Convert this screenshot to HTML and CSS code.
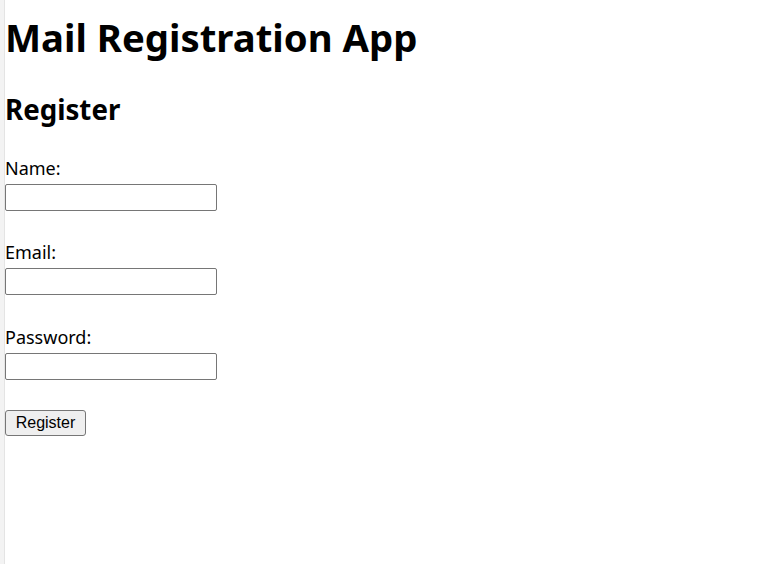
FILE: index.html
```html
<!DOCTYPE html>
<html lang="en">
<head>
<meta charset="utf-8">
<title>Mail Registration App</title>
<link rel="stylesheet" href="styles.css">
</head>
<body>
<div class="frame">
  <div class="strip"></div>
  <main class="content">
    <h1 class="title">Mail Registration App</h1>
    <h2 class="subtitle">Register</h2>
    <form class="form">
      <div class="field">
        <label class="label" for="name">Name:</label>
        <input class="input" id="name" type="text">
      </div>
      <div class="field">
        <label class="label" for="email">Email:</label>
        <input class="input" id="email" type="email">
      </div>
      <div class="field">
        <label class="label" for="password">Password:</label>
        <input class="input" id="password" type="password">
      </div>
      <button class="button" type="button">Register</button>
    </form>
  </main>
</div>
</body>
</html>
```
FILE: styles.css
```css
html, body {
  margin: 0;
  padding: 0;
  height: 100%;
  background: #ffffff;
}
body {
  font-family: "Noto Sans", "Open Sans", sans-serif;
  color: #000;
}
.frame {
  display: flex;
  min-height: 100%;
}
.strip {
  width: 4px;
  flex: none;
  background: #f3f3f3;
  border-right: 1px solid #e4e4e4;
}
.content {
  flex: 1;
  padding-top: 14px;
}
.title {
  margin: 0;
  font-size: 38.3px;
  line-height: 46px;
  font-weight: 700;
}
.subtitle {
  margin: 32px 0 0;
  font-size: 27.7px;
  line-height: 34px;
  font-weight: 700;
}
.form {
  display: flex;
  flex-direction: column;
  align-items: flex-start;
  margin-top: 30px;
}
.field {
  display: flex;
  flex-direction: column;
  align-items: flex-start;
  margin-bottom: 29px;
}
.field:nth-of-type(2) {
  margin-bottom: 30px;
}
.field:last-of-type {
  margin-bottom: 30px;
}
.label {
  font-size: 18px;
  line-height: 24px;
}
.input {
  margin: 4px 0 0;
  width: 212px;
  height: 27px;
  box-sizing: border-box;
  border: 1px solid #767676;
  border-radius: 2px;
  background: #fff;
  padding: 1px 2px;
}
.button {
  width: 81px;
  height: 26px;
  box-sizing: border-box;
  padding: 0;
  font-family: "Liberation Sans", Arial, sans-serif;
  font-size: 16px;
  color: #000;
  background: #efefef;
  border: 1px solid #767676;
  border-radius: 3px;
}
```
